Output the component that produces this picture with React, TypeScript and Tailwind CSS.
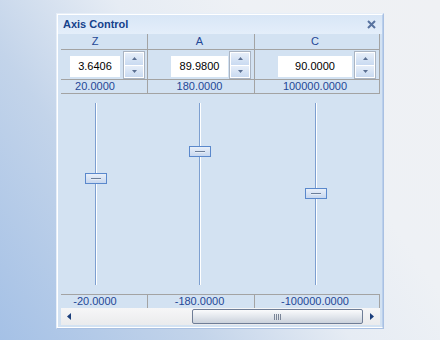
import React from "react";

type Col = {
  label: string;
  val: string;
  max: string;
  min: string;
  wCls: string;
  boxCls: string;
  inCls: string;
  gapCls: string;
  lineCls: string;
  thumbCls: string;
};

const cols: Col[] = [
  {
    label: "Z",
    val: "3.6406",
    max: "20.0000",
    min: "-20.0000",
    wCls: "w-[87px]",
    boxCls: "ml-[9px] w-[50px]",
    inCls: "w-[50px]",
    gapCls: "ml-[3px]",
    lineCls: "left-[25px]",
    thumbCls: "left-[15px] top-[79px]",
  },
  {
    label: "A",
    val: "89.9800",
    max: "180.0000",
    min: "-180.0000",
    wCls: "w-[107px]",
    boxCls: "ml-[23px] w-[57px]",
    inCls: "w-[57px]",
    gapCls: "ml-[1px]",
    lineCls: "left-[28px]",
    thumbCls: "left-[18px] top-[52px]",
  },
  {
    label: "C",
    val: "90.0000",
    max: "100000.0000",
    min: "-100000.0000",
    wCls: "w-[125px]",
    boxCls: "ml-[23px] w-[74px]",
    inCls: "w-[74px]",
    gapCls: "ml-[2px]",
    lineCls: "left-[37px]",
    thumbCls: "left-[27px] top-[94px]",
  },
];

const font = "font-['Liberation_Sans',Arial,sans-serif]";

function Spinner() {
  return (
    <div className="flex h-[28px] w-[22px] flex-col gap-[1px] border border-[#aab4c2] bg-white p-[1px]">
      <div className="flex flex-1 items-center justify-center bg-[linear-gradient(#e6eef9,#c9daf1)]">
        <svg width="5" height="3" viewBox="0 0 5 3">
          <path d="M0 3 L2.5 0 L5 3 Z" fill="#5b6f92" />
        </svg>
      </div>
      <div className="flex flex-1 items-center justify-center bg-[linear-gradient(#e6eef9,#c9daf1)]">
        <svg width="5" height="3" viewBox="0 0 5 3">
          <path d="M0 0 L2.5 3 L5 0 Z" fill="#5b6f92" />
        </svg>
      </div>
    </div>
  );
}

export default function App() {
  return (
    <div
      className={`h-[340px] w-[440px] overflow-hidden bg-[linear-gradient(55deg,#a5c1e6_0%,#c3d4ea_30%,#e6ecf4_52%,#eef1f5_70%,#eff1f4_100%)] pl-[56px] pt-[13px] ${font}`}
    >
      <div className="h-[316px] w-[328px] border border-[#a9c0e2] border-l-[#e6eef8] border-t-[#e6eef8]">
        <div className="flex h-full flex-col border border-white border-r-[#b9cfec] bg-[#d3e2f2]">
          {/* title */}
          <div className="flex h-[19px] shrink-0 items-center justify-between bg-[linear-gradient(#d8e6f6,#e4eefa)] pl-[5px] pr-[6px]">
            <span className="text-[11px] font-bold text-[#15428b]">Axis Control</span>
            <svg width="9" height="9" viewBox="0 0 9 9">
              <path d="M1 1 L8 8 M8 1 L1 8" stroke="#5873a0" strokeWidth="2" />
            </svg>
          </div>
          <div className="flex flex-1 flex-col pl-[3px] pr-[2px]">
            {/* header row */}
            <div className="flex h-[16px] border-b border-[#a3a3a3]">
              {cols.map((c) => (
                <div key={c.label} className={`${c.wCls} border-r border-[#a3a3a3]`}>
                  <div className={`${c.boxCls} text-center text-[11px] leading-[14px] text-[#1f4796]`}>
                    {c.label}
                  </div>
                </div>
              ))}
            </div>
            {/* input row */}
            <div className="flex h-[30px] border-b border-[#a3a3a3]">
              {cols.map((c) => (
                <div key={c.label} className={`${c.wCls} flex items-start border-r border-[#a3a3a3]`}>
                  <div
                    className={`${c.boxCls} mt-[6px] flex h-[21px] items-center justify-center bg-white text-[11px] text-black`}
                  >
                    {c.val}
                  </div>
                  <div className={`${c.gapCls} mt-[1px]`}>
                    <Spinner />
                  </div>
                </div>
              ))}
            </div>
            {/* max row */}
            <div className="flex h-[14px] border-b border-[#a3a3a3]">
              {cols.map((c) => (
                <div key={c.label} className={`${c.wCls} border-r border-[#a3a3a3]`}>
                  <div
                    className={`${c.boxCls} flex justify-center whitespace-nowrap text-[11px] leading-[13px] text-[#1f4796]`}
                  >
                    {c.max}
                  </div>
                </div>
              ))}
            </div>
            {/* sliders */}
            <div className="flex h-[200px]">
              {cols.map((c) => (
                <div key={c.label} className={`${c.wCls}`}>
                  <div className={`${c.boxCls} relative h-full`}>
                    <div className={`absolute bottom-[9px] top-[9px] ${c.lineCls} flex`}>
                      <div className="w-[1px] bg-[#7d9fd0]" />
                      <div className="w-[1px] bg-white" />
                    </div>
                    <div
                      className={`absolute ${c.thumbCls} flex h-[11px] w-[22px] items-center justify-center border border-[#5a88cc] bg-[linear-gradient(#e8eff9,#c7d7ef)]`}
                    >
                      <div className="flex flex-col">
                        <div className="h-[1px] w-[10px] bg-[#6c7e99]" />
                        <div className="h-[1px] w-[10px] bg-[#e6edf7]" />
                      </div>
                    </div>
                  </div>
                </div>
              ))}
            </div>
            {/* min row */}
            <div className="flex h-[14px] border-t border-[#a3a3a3]">
              {cols.map((c) => (
                <div key={c.label} className={`${c.wCls} border-r border-[#a3a3a3]`}>
                  <div
                    className={`${c.boxCls} flex justify-center whitespace-nowrap text-[11px] leading-[13px] text-[#1f4796]`}
                  >
                    {c.min}
                  </div>
                </div>
              ))}
            </div>
            {/* scrollbar */}
            <div className="flex h-[17px] w-[319px] bg-[linear-gradient(#f6f6f7,#eaebed)]">
              <div className="flex w-[16px] items-center justify-center">
                <svg width="4" height="7" viewBox="0 0 4 7">
                  <path d="M4 0 L0 3.5 L4 7 Z" fill="#1c3f7c" />
                </svg>
              </div>
              <div className="w-[115px]" />
              <div className="mt-[1px] flex h-[15px] w-[171px] items-center justify-center rounded-[2px] border border-[#6f7d96] bg-[linear-gradient(#fafbfc,#e3e7ed_50%,#cbd2dc)]">
                <div className="flex gap-[1px]">
                  <div className="h-[6px] w-[1px] bg-[#7a8597]" />
                  <div className="h-[6px] w-[1px] bg-[#7a8597]" />
                  <div className="h-[6px] w-[1px] bg-[#7a8597]" />
                  <div className="h-[6px] w-[1px] bg-[#7a8597]" />
                </div>
              </div>
              <div className="flex flex-1 items-center justify-center">
                <svg width="4" height="7" viewBox="0 0 4 7">
                  <path d="M0 0 L4 3.5 L0 7 Z" fill="#1c3f7c" />
                </svg>
              </div>
            </div>
          </div>
        </div>
      </div>
    </div>
  );
}
